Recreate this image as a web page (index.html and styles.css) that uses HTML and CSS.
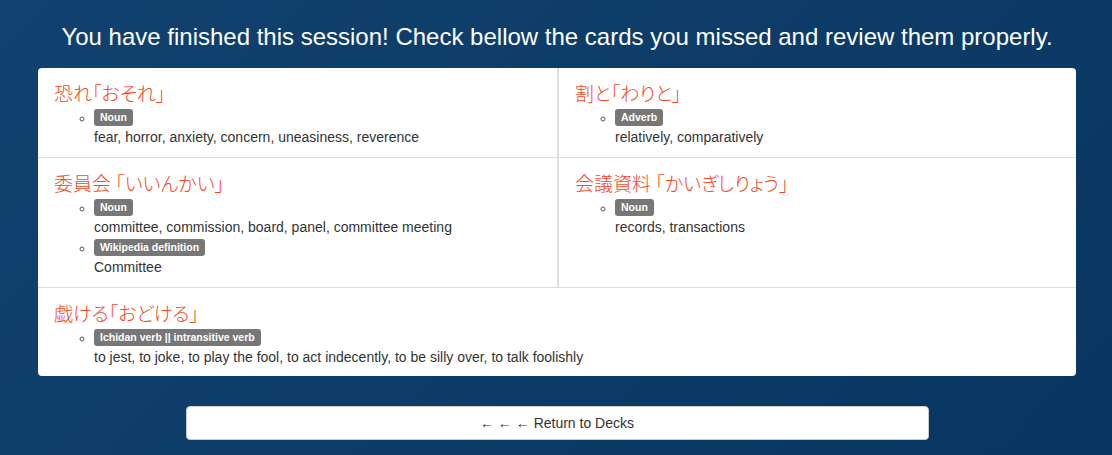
FILE: index.html
```html
<!DOCTYPE html>
<html lang="en">
<head>
<meta charset="utf-8">
<title>Session finished</title>
<link rel="stylesheet" href="styles.css">
</head>
<body>
<div class="page">
  <h1 class="headline">You have finished this session! Check bellow the cards you missed and review them properly.</h1>
  <div class="cards">
    <div class="card">
      <h3 class="word">恐れ「おそれ」</h3>
      <ul class="senses">
        <li><span class="badge">Noun</span><div class="meaning">fear, horror, anxiety, concern, uneasiness, reverence</div></li>
      </ul>
    </div>
    <div class="card card-right">
      <h3 class="word">割と「わりと」</h3>
      <ul class="senses">
        <li><span class="badge">Adverb</span><div class="meaning">relatively, comparatively</div></li>
      </ul>
    </div>
    <div class="card">
      <h3 class="word">委員会 「いいんかい」</h3>
      <ul class="senses">
        <li><span class="badge">Noun</span><div class="meaning">committee, commission, board, panel, committee meeting</div></li>
        <li><span class="badge">Wikipedia definition</span><div class="meaning">Committee</div></li>
      </ul>
    </div>
    <div class="card card-right">
      <h3 class="word">会議資料 「かいぎしりょう」</h3>
      <ul class="senses">
        <li><span class="badge">Noun</span><div class="meaning">records, transactions</div></li>
      </ul>
    </div>
    <div class="card card-wide">
      <h3 class="word">戯ける「おどける」</h3>
      <ul class="senses">
        <li><span class="badge">Ichidan verb || intransitive verb</span><div class="meaning">to jest, to joke, to play the fool, to act indecently, to be silly over, to talk foolishly</div></li>
      </ul>
    </div>
  </div>
  <div class="actions">
    <button class="back-btn" type="button">&larr; &larr; &larr; Return to Decks</button>
  </div>
</div>
</body>
</html>
```

FILE: styles.css
```css
html, body {
  margin: 0;
  padding: 0;
  height: 100%;
}
body {
  background: linear-gradient(135deg, #11416e 0%, #0d3c68 50%, #083661 100%);
  font-family: "Liberation Sans", Arial, "Noto Sans CJK JP", sans-serif;
  font-size: 14px;
  line-height: 1.42857;
  color: #333;
}
.page {
  padding: 23px 36px 0 38px;
}
.headline {
  margin: 0 0 17px 0;
  text-align: center;
  color: #fff;
  font-weight: normal;
  font-size: 24px;
  line-height: 28px;
}
.cards {
  display: grid;
  grid-template-columns: 521px 1fr;
  background: #fff;
  border-radius: 4px;
  overflow: hidden;
}
.card {
  padding: 12px 16px 10px 16px;
  border-bottom: 1px solid #ddd;
  border-right: 2px solid #ddd;
}
.card-right {
  border-right: none;
}
.card-wide {
  grid-column: 1 / 3;
  border-right: none;
  border-bottom: none;
  padding-bottom: 9px;
}
.word {
  margin: 0 0 1px 0;
  height: 26px;
  font-family: "Noto Sans CJK JP", "Liberation Sans", sans-serif;
  font-feature-settings: "palt" 1;
  font-weight: 300;
  font-size: 19px;
  line-height: 26px;
  color: #f4471c;
}
.senses {
  margin: 0;
  padding-left: 40px;
  list-style: circle;
}
.senses li {
  margin: 0;
  line-height: 20px;
}
.senses li::marker {
  color: #555;
  font-size: 12px;
}
.badge {
  display: inline-block;
  height: 17px;
  box-sizing: border-box;
  margin-top: 2px;
  vertical-align: top;
  background: #777;
  color: #fff;
  font-weight: bold;
  font-size: 10.5px;
  line-height: 11px;
  padding: 3px 6px 3px 6px;
  border-radius: 3px;
}
.meaning {
  height: 20px;
  line-height: 20px;
}
.actions {
  display: flex;
  justify-content: center;
  padding-top: 30px;
}
.back-btn {
  width: 743px;
  height: 34px;
  background: #fff;
  border: 1px solid #ccc;
  border-radius: 4px;
  font-family: "Liberation Sans", Arial, sans-serif;
  font-size: 14px;
  color: #333;
  cursor: pointer;
}
```
